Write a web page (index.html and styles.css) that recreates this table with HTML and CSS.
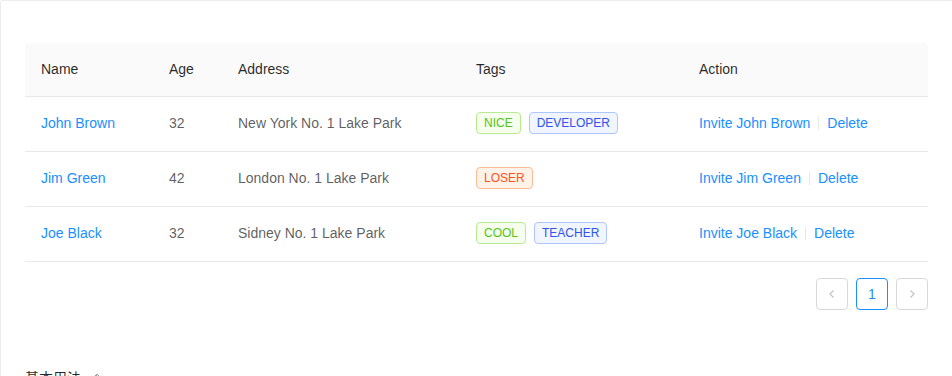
FILE: index.html
```html
<!DOCTYPE html>
<html lang="en">
<head>
    <meta charset="UTF-8">
    <title>Table</title>
    <meta name="viewport" content="width=device-width,initial-scale=1">
    <link rel="stylesheet" href="styles.css">
</head>
<body>

<section class="code-box">
    <div class="code-box-demo">
        <table class="table">
            <colgroup>
                <col style="width:128px">
                <col style="width:69px">
                <col style="width:238px">
                <col style="width:223px">
                <col>
            </colgroup>
            <thead>
                <tr>
                    <th>Name</th>
                    <th>Age</th>
                    <th>Address</th>
                    <th>Tags</th>
                    <th>Action</th>
                </tr>
            </thead>
            <tbody>
                <tr>
                    <td><a href="#">John Brown</a></td>
                    <td>32</td>
                    <td>New York No. 1 Lake Park</td>
                    <td><span class="tag green">NICE</span><span class="tag geekblue">DEVELOPER</span></td>
                    <td><a href="#">Invite John Brown</a><i class="divider"></i><a href="#">Delete</a></td>
                </tr>
                <tr>
                    <td><a href="#">Jim Green</a></td>
                    <td>42</td>
                    <td>London No. 1 Lake Park</td>
                    <td><span class="tag volcano">LOSER</span></td>
                    <td><a href="#">Invite Jim Green</a><i class="divider"></i><a href="#">Delete</a></td>
                </tr>
                <tr>
                    <td><a href="#">Joe Black</a></td>
                    <td>32</td>
                    <td>Sidney No. 1 Lake Park</td>
                    <td><span class="tag green">COOL</span><span class="tag geekblue">TEACHER</span></td>
                    <td><a href="#">Invite Joe Black</a><i class="divider"></i><a href="#">Delete</a></td>
                </tr>
            </tbody>
        </table>

        <ul class="pagination">
            <li class="page-btn disabled">
                <svg width="12" height="12" viewBox="0 0 12 12"><path d="M7.5 2.5L4 6l3.5 3.5" fill="none" stroke="currentColor" stroke-width="1.1"/></svg>
            </li>
            <li class="page-btn active">1</li>
            <li class="page-btn disabled">
                <svg width="12" height="12" viewBox="0 0 12 12"><path d="M4.5 2.5L8 6l-3.5 3.5" fill="none" stroke="currentColor" stroke-width="1.1"/></svg>
            </li>
        </ul>
    </div>

    <div class="code-box-meta">
        <h4 class="code-box-title">基本用法
            <svg class="edit" width="12" height="12" viewBox="0 0 12 12"><path d="M2 10l.4-2.2L8 2.2 9.8 4 4.2 9.6zM7 3.2L8.8 5" fill="none" stroke="currentColor" stroke-width="1"/></svg>
        </h4>
    </div>
</section>

</body>
</html>
```

FILE: styles.css
```css
body{
    margin: 0;
    background: #fff;
    font-family: "Liberation Sans", Arial, "Noto Sans CJK SC", sans-serif;
    font-size: 14px;
    line-height: 1.5715;
    color: rgba(0,0,0,0.65);
}
a{
    color: #1890ff;
    text-decoration: none;
}
ul{
    margin: 0;
    padding: 0;
    list-style: none;
}

.code-box{
    border: 1px solid #ebedf0;
    border-radius: 2px;
    margin-right: -1px;
}
.code-box-demo{
    padding: 42px 24px 50px;
}

/* table */
.table{
    width: 100%;
    table-layout: fixed;
    border-collapse: separate;
    border-spacing: 0;
}
.table th,
.table td{
    padding: 15px 16px 17px;
    text-align: left;
    border-bottom: 1px solid #e8e8e8;
    white-space: nowrap;
}
.table th{
    background: #fafafa;
    color: rgba(0,0,0,0.85);
    font-weight: 500;
    padding: 15px 16px 16px;
}
.table th:first-child{
    border-top-left-radius: 4px;
}
.table th:last-child{
    border-top-right-radius: 4px;
}

.tag{
    display: inline-block;
    height: 22px;
    box-sizing: border-box;
    padding: 0 7px;
    margin-right: 8px;
    font-size: 12px;
    line-height: 20px;
    border: 1px solid;
    border-radius: 4px;
    vertical-align: 1px;
}
.tag.green{
    color: #52c41a;
    background: #f6ffed;
    border-color: #b7eb8f;
}
.tag.geekblue{
    color: #2f54eb;
    background: #f0f5ff;
    border-color: #adc6ff;
}
.tag.volcano{
    color: #fa541c;
    background: #fff2e8;
    border-color: #ffbb96;
}

.divider{
    display: inline-block;
    width: 1px;
    height: 0.9em;
    margin: 0 8px;
    background: #e8e8e8;
    vertical-align: middle;
    position: relative;
    top: -1px;
}

/* pagination */
.pagination{
    display: flex;
    justify-content: flex-end;
    gap: 8px;
    margin-top: 16px;
}
.page-btn{
    width: 32px;
    height: 32px;
    box-sizing: border-box;
    border: 1px solid #d9d9d9;
    border-radius: 4px;
    display: flex;
    align-items: center;
    justify-content: center;
    color: rgba(0,0,0,0.65);
}
.page-btn.disabled{
    color: rgba(0,0,0,0.25);
}
.page-btn.active{
    border-color: #1890ff;
    color: #1890ff;
}

.code-box-meta{
    padding: 7px 24px 0;
}
.code-box-title{
    margin: 0;
    font-size: 14px;
    font-weight: normal;
    color: rgba(0,0,0,0.85);
    display: flex;
    align-items: center;
    gap: 8px;
}
.code-box-title .edit{
    color: rgba(0,0,0,0.45);
}
```
